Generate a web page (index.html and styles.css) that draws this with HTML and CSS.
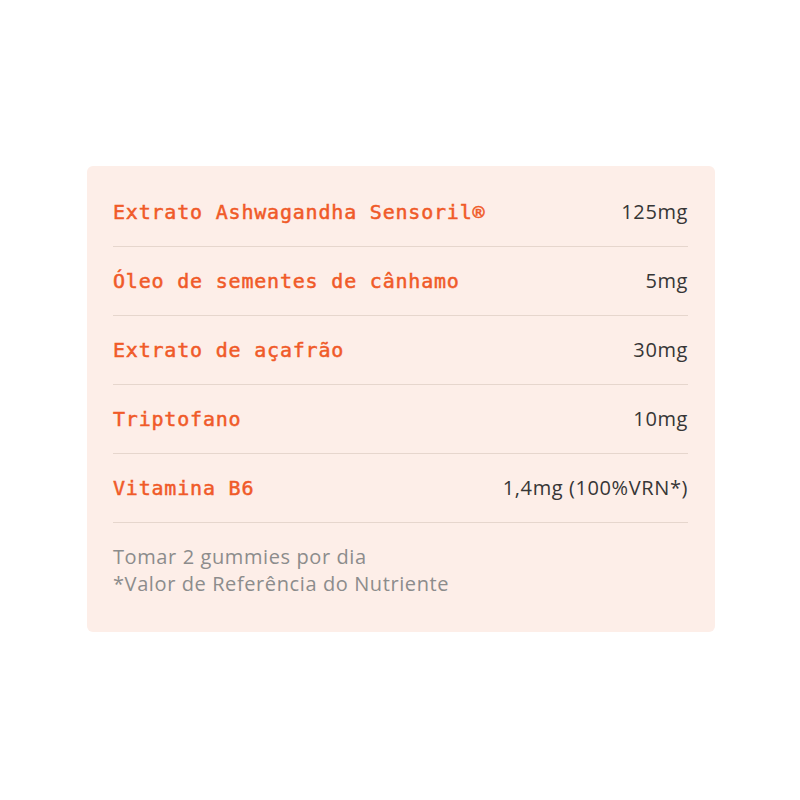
FILE: index.html
```html
<!DOCTYPE html>
<html lang="pt">
<head>
<meta charset="utf-8">
<link rel="stylesheet" href="styles.css">
</head>
<body>
<div class="card">
  <div class="row"><span class="label">Extrato Ashwagandha Sensoril®</span><span class="value">125mg</span></div>
  <div class="row"><span class="label">Óleo de sementes de cânhamo</span><span class="value">5mg</span></div>
  <div class="row"><span class="label">Extrato de açafrão</span><span class="value">30mg</span></div>
  <div class="row"><span class="label">Triptofano</span><span class="value">10mg</span></div>
  <div class="row"><span class="label">Vitamina B6</span><span class="value">1,4mg (100%VRN*)</span></div>
  <div class="footer">
    <p>Tomar 2 gummies por dia</p>
    <p>*Valor de Referência do Nutriente</p>
  </div>
</div>
</body>
</html>
```
FILE: styles.css
```css
html, body {
  margin: 0;
  padding: 0;
  background: #ffffff;
}
body {
  padding-top: 166px;
  padding-left: 87px;
}
.card {
  width: 628px;
  height: 466px;
  box-sizing: border-box;
  background: #fdeee8;
  border-radius: 6px;
  padding: 12px 27px 34px 26px;
}
.row {
  display: flex;
  justify-content: space-between;
  align-items: center;
  padding: 23px 0;
  line-height: 22px;
  border-bottom: 1px solid #e6d6cd;
}
.label {
  font-family: "DejaVu Sans Mono", "Liberation Mono", monospace;
  font-size: 20px;
  letter-spacing: 0.8px;
  font-weight: normal;
  -webkit-text-stroke: 0.5px #f05a28;
  color: #f05a28;
}
.value {
  font-family: "Open Sans", "Noto Sans", sans-serif;
  font-size: 20px;
  letter-spacing: 0.6px;
  color: #363636;
}
.footer {
  padding-top: 20px;
}
.footer p {
  margin: 0;
  font-family: "Open Sans", "Noto Sans", sans-serif;
  font-size: 20px;
  letter-spacing: 0.6px;
  line-height: 27px;
  color: #8c8c8c;
}
```
